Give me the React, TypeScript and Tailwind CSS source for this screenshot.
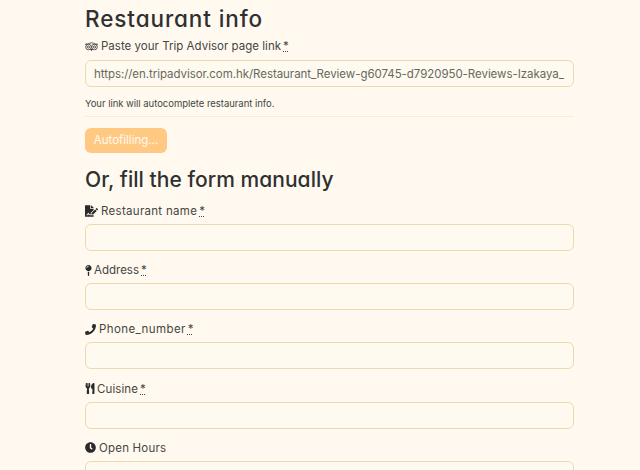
import type { ReactNode } from "react";
import { FaFileSignature, FaMapPin, FaPhone, FaUtensils, FaClock } from "react-icons/fa";

const inputStyle =
  "block h-[27px] w-full rounded-[6px] border border-[#eadbaf] bg-[#fffaf0] px-[8px] text-[11.5px] text-[#686861] outline-none";

function OwlIcon() {
  return (
    <svg viewBox="0 0 26 18" className="h-[9px] w-[13px]" fill="none" stroke="currentColor" strokeWidth="1.5">
      <path d="M1 4H6C10 1 16 1 20 4H25L23.5 6.5M1 4L2.5 6.5" />
      <circle cx="7" cy="10" r="5.6" />
      <circle cx="19" cy="10" r="5.6" />
      <circle cx="7" cy="10" r="2.2" />
      <circle cx="19" cy="10" r="2.2" />
      <path d="M11 14L13 17L15 14" fill="currentColor" />
    </svg>
  );
}

function Label({ icon, gap, children, spacing, required = true }: { icon: ReactNode; gap: string; children: string; spacing: string; required?: boolean }) {
  return (
    <label className="flex h-4 items-center whitespace-nowrap text-[11.5px] leading-4 text-[#454642]">
      <span className={`shrink-0 text-[#292b2b] ${gap}`}>{icon}</span>
      <span className={spacing}>{children}</span>
      {required && <abbr title="required" className="ml-[2px] underline decoration-dotted decoration-1 underline-offset-1">*</abbr>}
    </label>
  );
}

function Field(props: { icon: ReactNode; gap: string; label: string; spacing: string; required?: boolean }) {
  return (
    <div className="flex h-[59.2px] flex-col gap-[5px]">
      <Label icon={props.icon} gap={props.gap} spacing={props.spacing} required={props.required}>{props.label}</Label>
      <input className={inputStyle} />
    </div>
  );
}

const heading = "whitespace-nowrap font-medium leading-7 text-[#2f3130] [font-feature-settings:'cv11']";

export default function App() {
  return (
    <main className="h-[470px] overflow-hidden bg-[#fff9f0] pl-[85px] pt-[5px] font-['Inter','Open_Sans',sans-serif]">
      <form className="w-[489px]">
        <h2 className={`${heading} text-[22.5px] tracking-[0.9px]`}>Restaurant info</h2>
        <div className="mt-[5px] flex flex-col gap-[6px]">
          <Label icon={<OwlIcon />} gap="mr-[3px]" spacing="tracking-[0.02px]">Paste your Trip Advisor page link</Label>
          <input className={`${inputStyle} tracking-[-0.05px]`} defaultValue="https://en.tripadvisor.com.hk/Restaurant_Review-g60745-d7920950-Reviews-Izakaya_" />
        </div>
        <p className="mt-[10px] h-[14px] whitespace-nowrap text-[9.5px] leading-[14px] tracking-[-0.03px] text-[#454642]">Your link will autocomplete restaurant info.</p>
        <hr className="mt-[5px] border-[#f5edda]" />
        <button type="button" className="mt-[11px] block h-[25px] w-[82px] rounded-[6px] bg-[#ffc983] text-[11.5px] leading-[25px] text-[#fffaf0]">Autofilling...</button>
        <h2 className={`${heading} mt-[13px] text-[21px] tracking-[0.05px]`}>Or, fill the form manually</h2>
        <div className="mt-[9px]">
          <Field icon={<FaFileSignature className="h-[12px] w-[13px]" />} gap="mr-[3px]" label="Restaurant name" spacing="tracking-[0.3px]" />
          <Field icon={<FaMapPin className="h-[11px] w-[7px]" />} gap="mr-[2px]" label="Address" spacing="tracking-[0px]" />
          <Field icon={<FaPhone className="h-[11px] w-[11px]" />} gap="mr-[3px]" label="Phone_number" spacing="tracking-[0.4px]" />
          <Field icon={<FaUtensils className="h-[11px] w-[10px]" />} gap="mr-[2px]" label="Cuisine" spacing="tracking-[0.1px]" />
          <Field icon={<FaClock className="h-[11px] w-[11px]" />} gap="mr-[3px]" label="Open Hours" spacing="tracking-[0.2px]" required={false} />
        </div>
      </form>
    </main>
  );
}
